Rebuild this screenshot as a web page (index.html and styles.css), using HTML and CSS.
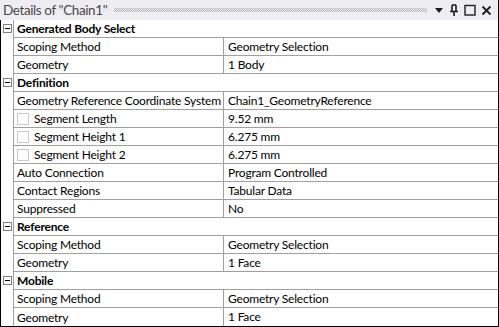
FILE: index.html
```html
<!DOCTYPE html>
<html lang="en">
<head>
    <meta charset="UTF-8">
    <title>Details of "Chain1"</title>
    <link rel="stylesheet" href="styles.css">
</head>
<body>
    <div class="panel">
        <div class="titlebar">
            <span class="title">Details of "Chain1"</span>
            <span class="grip"></span>
            <span class="title-buttons">
                <svg width="10" height="10" viewBox="0 0 10 10"><path d="M1 3 H9 L5 8 Z" fill="#1e1e1e"/></svg>
                <svg width="10" height="12" viewBox="0 0 10 12"><path d="M3 1 V7 M7 1 V7 M3 1 H7 M1 7.5 H9 M5 8 V12" stroke="#1e1e1e" stroke-width="1.6" fill="none"/></svg>
                <svg width="12" height="12" viewBox="0 0 12 12"><rect x="1" y="1.5" width="10" height="9.5" stroke="#1e1e1e" stroke-width="1.4" fill="none"/></svg>
                <svg width="11" height="11" viewBox="0 0 11 11"><path d="M1.5 1.5 L9.5 9.5 M9.5 1.5 L1.5 9.5" stroke="#1e1e1e" stroke-width="1.8"/></svg>
            </span>
        </div>
        <div class="grid">
            <div class="row header"><span class="gutter"><i class="toggle"></i></span><span class="group-name">Generated Body Select</span></div>
            <div class="row"><span class="gutter"></span><span class="name">Scoping Method</span><span class="value">Geometry Selection</span></div>
            <div class="row"><span class="gutter"></span><span class="name">Geometry</span><span class="value">1 Body</span></div>

            <div class="row header"><span class="gutter"><i class="toggle"></i></span><span class="group-name">Definition</span></div>
            <div class="row"><span class="gutter"></span><span class="name">Geometry Reference Coordinate System</span><span class="value">Chain1_GeometryReference</span></div>
            <div class="row"><span class="gutter"></span><span class="name"><i class="check"></i>Segment Length</span><span class="value">9.52 mm</span></div>
            <div class="row"><span class="gutter"></span><span class="name"><i class="check"></i>Segment Height 1</span><span class="value">6.275 mm</span></div>
            <div class="row"><span class="gutter"></span><span class="name"><i class="check"></i>Segment Height 2</span><span class="value">6.275 mm</span></div>
            <div class="row"><span class="gutter"></span><span class="name">Auto Connection</span><span class="value">Program Controlled</span></div>
            <div class="row"><span class="gutter"></span><span class="name">Contact Regions</span><span class="value">Tabular Data</span></div>
            <div class="row"><span class="gutter"></span><span class="name">Suppressed</span><span class="value">No</span></div>

            <div class="row header"><span class="gutter"><i class="toggle"></i></span><span class="group-name">Reference</span></div>
            <div class="row"><span class="gutter"></span><span class="name">Scoping Method</span><span class="value">Geometry Selection</span></div>
            <div class="row"><span class="gutter"></span><span class="name">Geometry</span><span class="value">1 Face</span></div>

            <div class="row header"><span class="gutter"><i class="toggle"></i></span><span class="group-name">Mobile</span></div>
            <div class="row"><span class="gutter"></span><span class="name">Scoping Method</span><span class="value">Geometry Selection</span></div>
            <div class="row last"><span class="gutter"></span><span class="name">Geometry</span><span class="value">1 Face</span></div>
        </div>
    </div>
</body>
</html>
```

FILE: styles.css
```css
body {
    margin: 0;
    background: #ffffff;
    font-family: Lato, "Noto Sans", sans-serif;
    font-size: 12px;
    letter-spacing: -0.2px;
    color: #000;
}

.panel {
    width: 499px;
    height: 327px;
    box-sizing: border-box;
    border-right: 1px solid #000;
    border-bottom: 1px solid #000;
    overflow: hidden;
}

.titlebar {
    height: 20px;
    background: #eeeef2;
    display: flex;
    align-items: center;
    padding-left: 3px;
}

.title {
    font-size: 13.5px;
    letter-spacing: -0.4px;
    color: #4a4a4a;
    white-space: nowrap;
    line-height: 20px;
}

.grip {
    flex: 1;
    height: 4px;
    margin: 0 7px 0 7px;
    background: repeating-conic-gradient(#b4b4b8 0 25%, transparent 0 50%) 0 0 / 2px 2px;
}

.title-buttons {
    display: flex;
    align-items: center;
    gap: 5px;
    padding-right: 6px;
}

.title-buttons svg {
    display: block;
}

.grid {
    border-left: 1px solid #000;
    background: #fff;
}

.row {
    display: flex;
    height: 18px;
    line-height: 17px;
}

.gutter {
    width: 12px;
    flex: none;
    border-right: 1px solid #a0a0a0;
    position: relative;
}

.toggle {
    position: absolute;
    left: 2px;
    top: 4px;
    width: 7px;
    height: 7px;
    border: 1px solid #808080;
    background: #fff;
}

.toggle::after {
    content: "";
    position: absolute;
    left: 1px;
    top: 3px;
    width: 5px;
    height: 1px;
    background: #000;
}

.name,
.value,
.group-name {
    box-sizing: border-box;
    height: 18px;
    border-bottom: 1px solid #a0a0a0;
    white-space: nowrap;
    overflow: hidden;
}

.name {
    width: 210px;
    flex: none;
    padding-left: 3px;
    border-right: 1px solid #a0a0a0;
    display: flex;
    align-items: center;
}

.value {
    flex: 1;
    padding-left: 4px;
}

.group-name {
    flex: 1;
    padding-left: 3px;
    font-weight: bold;
}

.check {
    width: 10px;
    height: 10px;
    border: 1px solid #c8c8c8;
    margin-right: 5px;
    flex: none;
}

.row.last .name,
.row.last .value {
    border-bottom: none;
}
```
